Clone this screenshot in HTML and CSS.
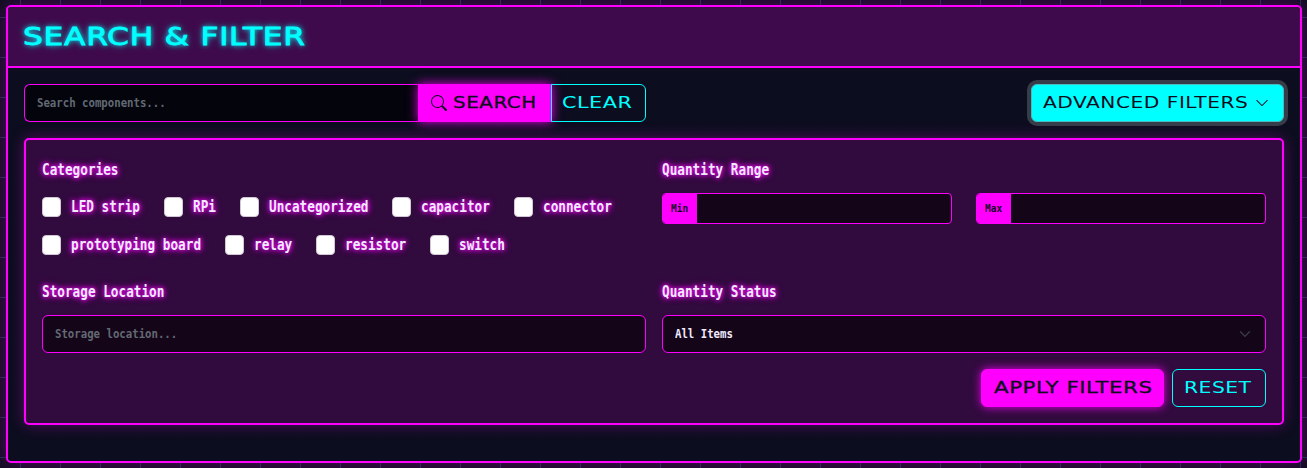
FILE: index.html
```html
<!DOCTYPE html>
<html lang="en">
<head>
<meta charset="utf-8">
<title>Search &amp; Filter</title>
<link rel="stylesheet" href="styles.css">
</head>
<body>
<section class="card">
  <header class="card-header"><h1 class="title"><span class="wide">SEARCH &amp; FILTER</span></h1></header>
  <div class="card-body">
    <div class="toolbar">
      <div class="search-group">
        <div class="field search-field"><span class="mono small muted">Search components...</span></div>
        <button class="btn btn-primary btn-search">
          <svg width="16" height="16" viewBox="0 0 16 16" fill="currentColor"><path d="M11.742 10.344a6.5 6.5 0 1 0-1.397 1.398h-.001q.044.06.098.115l3.85 3.85a1 1 0 0 0 1.415-1.414l-3.85-3.85a1 1 0 0 0-.115-.1zM12 6.5a5.5 5.5 0 1 1-11 0 5.5 5.5 0 0 1 11 0"/></svg>
          <span class="wide w-search">SEARCH</span>
        </button>
        <button class="btn btn-outline btn-clear"><span class="wide w-clear">CLEAR</span></button>
      </div>
      <button class="btn btn-info"><span class="wide w-advanced">ADVANCED FILTERS</span>
        <svg width="14" height="14" viewBox="0 0 16 16" fill="currentColor"><path fill-rule="evenodd" d="M1.646 4.646a.5.5 0 0 1 .708 0L8 10.293l5.646-5.647a.5.5 0 0 1 .708.708l-6 6a.5.5 0 0 1-.708 0l-6-6a.5.5 0 0 1 0-.708"/></svg>
      </button>
    </div>
    <div class="panel">
      <div class="row row-top">
        <div>
          <div class="label"><span class="mono">Categories</span></div>
          <div class="checks">
            <label class="check"><i class="box"></i><span class="mono" style="--n:9">LED strip</span></label>
            <label class="check"><i class="box"></i><span class="mono" style="--n:3">RPi</span></label>
            <label class="check"><i class="box"></i><span class="mono" style="--n:13">Uncategorized</span></label>
            <label class="check"><i class="box"></i><span class="mono" style="--n:9">capacitor</span></label>
            <label class="check"><i class="box"></i><span class="mono" style="--n:9">connector</span></label>
            <label class="check"><i class="box"></i><span class="mono" style="--n:17">prototyping board</span></label>
            <label class="check"><i class="box"></i><span class="mono" style="--n:5">relay</span></label>
            <label class="check"><i class="box"></i><span class="mono" style="--n:8">resistor</span></label>
            <label class="check"><i class="box"></i><span class="mono" style="--n:6">switch</span></label>
          </div>
        </div>
        <div>
          <div class="label"><span class="mono">Quantity Range</span></div>
          <div class="range">
            <div class="range-field"><div class="addon"><span class="mono tiny">Min</span></div></div>
            <div class="range-field"><div class="addon"><span class="mono tiny">Max</span></div></div>
          </div>
        </div>
      </div>
      <div class="row row-bottom">
        <div>
          <div class="label"><span class="mono">Storage Location</span></div>
          <div class="field"><span class="mono small muted">Storage location...</span></div>
        </div>
        <div>
          <div class="label"><span class="mono">Quantity Status</span></div>
          <div class="field select"><span class="mono small">All Items</span>
            <svg width="16" height="12" viewBox="0 0 16 16" fill="none" stroke="#343a40" stroke-width="2" stroke-linecap="round" stroke-linejoin="round"><path d="m2 5 6 6 6-6"/></svg>
          </div>
        </div>
      </div>
      <div class="actions">
        <button class="btn btn-primary btn-apply"><span class="wide w-apply">APPLY FILTERS</span></button>
        <button class="btn btn-outline btn-reset"><span class="wide w-reset">RESET</span></button>
      </div>
    </div>
  </div>
</section>
</body>
</html>
```
FILE: styles.css
```css
* { box-sizing: border-box; }
html { height: 100%; background: #0d0d1e; }
body {
  margin: 0;
  height: 468px;
  overflow: hidden;
  padding: 5px 5px 5px 6px;
  background:
    repeating-linear-gradient(90deg, transparent 0 20px, #1b2d50 20px 21px, transparent 21px 40px),
    repeating-linear-gradient(180deg, transparent 0 17px, #1b2d50 17px 18px, transparent 18px 40px),
    #0d0d1e;
  color: #f0eaff;
  font-family: "DejaVu Sans Mono", monospace;
}
.card {
  height: 458px;
  border: 2px solid #f0f;
  border-radius: 5px;
  background: rgba(12, 13, 30, .97);
  box-shadow: 0 0 20px rgba(255, 0, 255, .3);
}
.card-header {
  height: 61px;
  padding: 0 15px;
  display: flex;
  align-items: center;
  background: #3f0a4b;
  border-bottom: 2px solid #f0f;
  border-radius: 3px 3px 0 0;
}
.title { margin: 0; font-weight: 400; }
.wide {
  display: block;
  flex: none;
  white-space: nowrap;
  text-align: left;
  font-family: "DejaVu Sans", sans-serif;
  font-size: 16.5px;
  line-height: 20px;
  letter-spacing: .4px;
  transform-origin: 0 50%;
}
.title .wide {
  font-size: 25px;
  line-height: 30px;
  letter-spacing: .6px;
  color: #0ff;
  -webkit-text-stroke: .8px #0ff;
  text-shadow: 0 0 5px #0ff, 0 0 8px rgba(0, 255, 255, .5);
  transform: scaleX(1.25);
}
.w-search { width: 85px; transform: scaleX(1.21); }
.w-clear { width: 70px; transform: scaleX(1.26); }
.w-advanced { width: 206px; transform: scaleX(1.225); }
.w-apply { width: 158px; transform: scaleX(1.295); }
.w-reset { width: 68px; transform: scaleX(1.23); }
.mono {
  display: block;
  width: calc(var(--n, 0) * 7.65px);
  white-space: nowrap;
  font-size: 15px;
  font-weight: 700;
  line-height: 20px;
  transform: scaleX(.847);
  transform-origin: 0 50%;
}
.mono.small { font-size: 13px; transform: scaleX(.822); }
.mono.tiny { font-size: 11px; width: 17px; transform: scaleX(.86); }
.muted { color: #626a73; }
.card-body { padding: 16px; }
.toolbar { display: flex; justify-content: space-between; margin-bottom: 16px; }
.search-group { display: flex; width: 622px; }
.field {
  height: 38px;
  padding: 0 12px;
  display: flex;
  align-items: center;
  border: 1px solid #f0f;
  border-radius: 6px;
  background: #150518;
}
.search-field { flex: 1; border-right: 0; border-radius: 6px 0 0 6px; background: #04040d; }
.btn {
  height: 38px;
  padding: 0 12px;
  display: flex;
  align-items: center;
  border: 1px solid;
  border-radius: 6px;
}
.btn-primary { color: #0d0d1e; background: #f0f; border-color: #f0f; box-shadow: 0 0 10px rgba(255, 0, 255, .9); }
.btn-primary .wide { -webkit-text-stroke: .3px; }
.btn-outline { color: #0ff; background: transparent; border-color: #0ff; }
.btn-search { width: 134px; gap: 6px; border-radius: 0; }
.btn-clear { width: 95px; margin-left: -1px; padding: 0 10px; border-radius: 0 6px 6px 0; position: relative; }
.btn-info { width: 253px; padding: 0 11px; gap: 6px; color: #0d0d1e; background: #0ff; border-color: #4bb8c0; box-shadow: 0 0 0 4px #373c49; }
.btn svg { flex: none; }
.panel {
  height: 287px;
  padding: 16px;
  border: 2px solid #f0f;
  border-radius: 5px;
  background: #310a3e;
  box-shadow: 0 0 15px rgba(255, 0, 255, .3);
}
.row { display: grid; grid-template-columns: 1fr 1fr; gap: 16px; }
.row-top { height: 122px; }
.row-bottom { height: 91px; }
.label { height: 37px; padding-top: 4px; text-shadow: 0 0 5px #f0f, 0 0 8px #f0f; }
.checks { display: flex; flex-wrap: wrap; column-gap: 24px; row-gap: 14px; padding-top: 2px; }
.check { display: flex; align-items: center; height: 24px; gap: 10px; text-shadow: 0 0 5px #f0f, 0 0 8px #f0f; }
.check .mono { line-height: 24px; }
.box { flex: none; width: 19px; height: 20px; border: 1px solid #d0c8d3; border-radius: 4px; background: #fff; }
.range { display: grid; grid-template-columns: 1fr 1fr; gap: 24px; }
.range-field { height: 31px; border: 1px solid #f0f; border-radius: 4px; background: #150518; overflow: hidden; }
.addon { width: 34px; height: 29px; padding-left: 8px; display: flex; align-items: center; color: #16071f; background: #f0f; }
.select { justify-content: space-between; }
.actions { display: flex; justify-content: flex-end; gap: 8px; }
.btn-apply { width: 183px; }
.btn-reset { width: 94px; padding: 0 11px; }
```
